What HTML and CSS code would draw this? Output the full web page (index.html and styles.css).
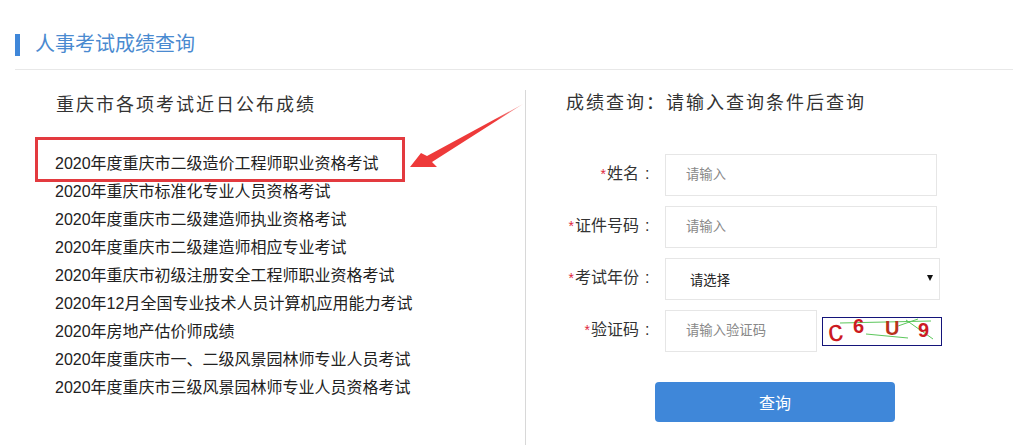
FILE: index.html
```html
<!DOCTYPE html>
<html lang="zh-CN">
<head>
<meta charset="utf-8">
<title>人事考试成绩查询</title>
<link rel="stylesheet" href="styles.css">
</head>
<body>
<div class="page">
  <header class="head"><h1 class="head-title">人事考试成绩查询</h1></header>
  <main class="cols">
    <section class="left">
      <h2 class="left-title">重庆市各项考试近日公布成绩</h2>
      <ul class="list">
        <li>2020年度重庆市二级造价工程师职业资格考试</li>
        <li>2020年重庆市标准化专业人员资格考试</li>
        <li>2020年度重庆市二级建造师执业资格考试</li>
        <li>2020年度重庆市二级建造师相应专业考试</li>
        <li>2020年重庆市初级注册安全工程师职业资格考试</li>
        <li>2020年12月全国专业技术人员计算机应用能力考试</li>
        <li>2020年房地产估价师成绩</li>
        <li>2020年度重庆市一、二级风景园林师专业人员考试</li>
        <li>2020年度重庆市三级风景园林师专业人员资格考试</li>
      </ul>
    </section>
    <section class="right">
      <h2 class="right-title">成绩查询：请输入查询条件后查询</h2>
      <form class="form">
        <div class="row"><label class="lab"><i>*</i>姓名<span class="colon">:</span></label><input class="field" placeholder="请输入"></div>
        <div class="row"><label class="lab"><i>*</i>证件号码<span class="colon">:</span></label><input class="field" placeholder="请输入"></div>
        <div class="row"><label class="lab"><i>*</i>考试年份<span class="colon">:</span></label>
          <div class="select-wrap"><select class="select"><option>请选择</option></select></div></div>
        <div class="row"><label class="lab"><i>*</i>验证码<span class="colon">:</span></label><input class="field short" placeholder="请输入验证码">
          <svg class="captcha" width="120" height="29" viewBox="0 0 120 29">
            <rect x="0.5" y="0.5" width="119" height="28" fill="#fff" stroke="#14147a"/>
            <g stroke="#5cc75c" stroke-width="1" fill="none">
              <path d="M18 6 L109 4"/><path d="M44 17 L86 21"/><path d="M76 9 L96 2"/><path d="M84 3 L111 22"/>
            </g>
            <g class="cap-text">
              <text x="6" y="24" font-size="30" transform="rotate(-8 13 16)">c</text>
              <text x="31" y="16" font-size="20" font-weight="700">6</text>
              <text x="63" y="18" font-size="20" font-weight="700" fill="#b8321a">U</text>
              <text x="96" y="20" font-size="20" font-weight="700">9</text>
            </g>
          </svg>
        </div>
        <button class="btn" type="button">查询</button>
      </form>
    </section>
  </main>
  <div class="redbox"></div>
  <svg class="arrow" width="120" height="72" viewBox="0 0 120 72">
    <defs><linearGradient id="g" x1="0" y1="1" x2="1" y2="0"><stop offset="0.75" stop-color="#ee3a3a"/><stop offset="1" stop-color="#f7b0b0"/></linearGradient></defs>
    <polygon fill="url(#g)" points="115,2 24,60 29,65 2,65 13,51 19,54"/>
  </svg>
</div>
</body>
</html>
```
FILE: styles.css
```css
* { box-sizing: border-box; }
html, body { margin: 0; padding: 0; background: #fff; }
body { font-family: "Liberation Sans", "Noto Sans CJK SC", sans-serif; color: #333; }
.page { position: relative; width: 1013px; height: 445px; overflow: hidden; display: flex; flex-direction: column; padding-top: 34px; }
.head { margin-left: 15px; height: 36px; border-bottom: 1px solid #e8e8e8; }
.head-title { margin: 0; height: 22px; line-height: 21px; border-left: 5px solid #3f87d9; padding-left: 15px; font-size: 20px; font-weight: 400; color: #4a8ad0; }
.cols { display: flex; flex: 1; margin-top: 20px; }
.left { width: 526px; border-right: 1px solid #d8d8d8; padding-top: 2px; padding-left: 55px; }
.left-title { margin: 0 0 0 1px; font-size: 18px; line-height: 26px; font-weight: 400; letter-spacing: 2px; color: #333; }
.list { list-style: none; margin: 32px 0 0; padding: 0; font-size: 16px; line-height: 28px; color: #222; }
.right { flex: 1; padding-left: 40px; }
.right-title { margin: 0; font-size: 18px; line-height: 26px; font-weight: 400; letter-spacing: 2px; color: #333; }
.form { margin-top: 38px; width: 380px; }
.row { display: flex; align-items: flex-start; height: 42px; margin-bottom: 10px; }
.lab { width: 99px; line-height: 40px; text-align: right; font-size: 16px; color: #333; white-space: nowrap; flex: none; }
.lab i { font-style: normal; color: #e0263c; font-size: 14px; margin-right: 1px; }
.colon { display: inline-block; width: 26px; padding-left: 6px; text-align: left; }
.field { width: 272px; height: 42px; border: 1px solid #e6e6e6; padding: 0 20px 2px; font: 13.33px "Liberation Sans", "Noto Sans CJK SC", sans-serif; outline: none; background: #fff; }
.field::placeholder { color: #888; opacity: 1; }
.field.short { width: 152px; }
.select-wrap { position: relative; width: 275px; height: 42px; }
.select-wrap::after { content: ""; position: absolute; right: 7px; top: 17px; border: 3.5px solid transparent; border-top: 6px solid #111; border-bottom: 0; }
.select { width: 100%; height: 100%; appearance: none; border: 1px solid #e6e6e6; border-radius: 0; padding: 2px 24px 0; background: #fff; color: #222; font: 13.33px "Liberation Sans", "Noto Sans CJK SC", sans-serif; outline: none; }
.captcha { margin: 7px 0 0 5px; flex: none; display: block; overflow: visible; }
.cap-text { font-family: "Liberation Sans", sans-serif; fill: #cc1a22; }
.btn { display: block; margin: 30px 0 0 89px; width: 240px; height: 40px; border: 0; border-radius: 4px; background: #3f87d9; color: #fff; font: 16px "Liberation Sans", "Noto Sans CJK SC", sans-serif; }
.redbox { position: absolute; left: 35px; top: 137px; width: 370px; height: 45px; border: 3px solid #e33a3f; }
.arrow { position: absolute; left: 408px; top: 102px; }
```
